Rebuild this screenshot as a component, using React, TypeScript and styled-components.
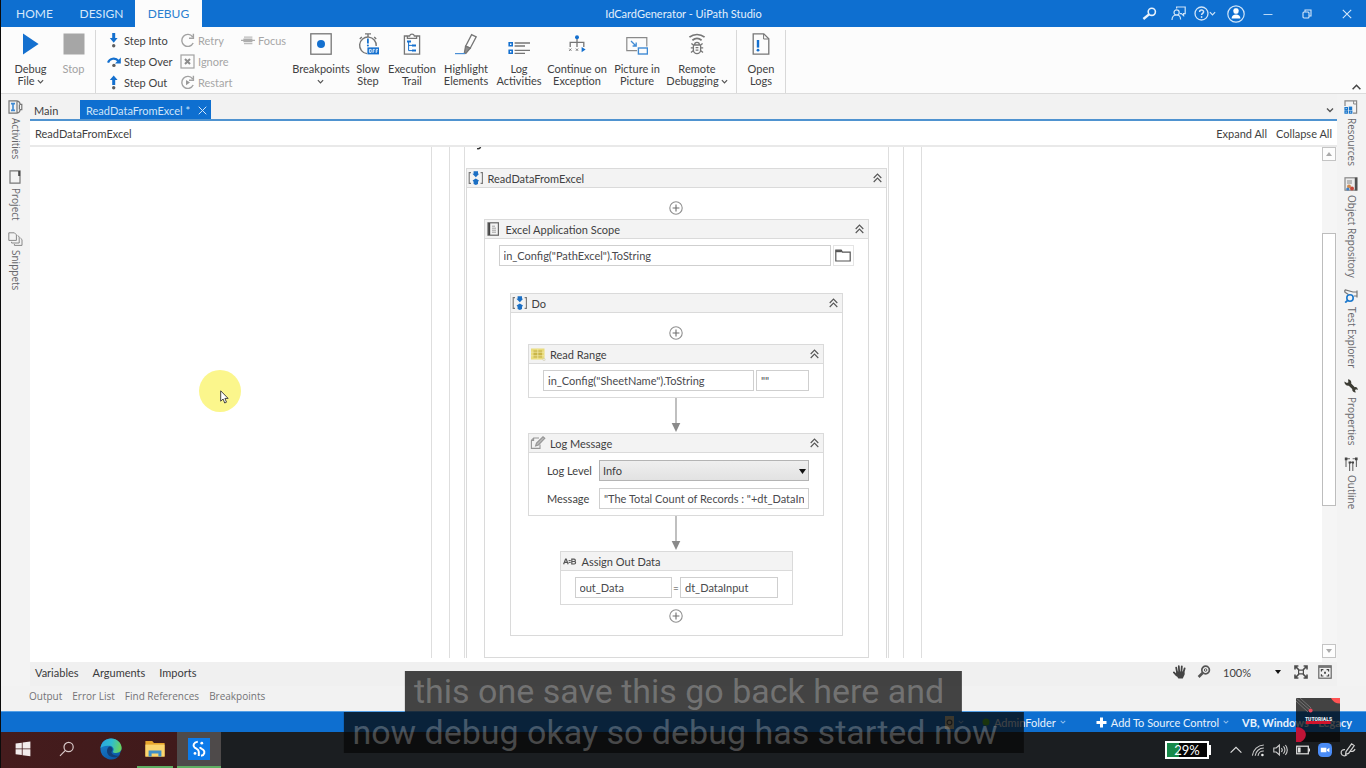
import React from "react";
import styled, { createGlobalStyle, css } from "styled-components";

const GlobalStyle = createGlobalStyle`
  *, *::before, *::after { box-sizing: border-box; }
  body { margin: 0; background: #f2f2f2; }
  body, button, input, select {
    font-family: Lato, "Open Sans", sans-serif;
    font-size: 11px;
    color: #3f3f42;
  }
  button { padding: 0; border: 0; background: none; cursor: pointer; }
  svg { display: block; flex: none; }
`;

const BLUE = "#0e6fd0";
const GREY = "#767676";

/* ---------- Frame ---------- */

const Shell = styled.div`
  position: relative;
  display: flex;
  flex-direction: column;
  min-height: 100vh;
  border-left: 1px solid #0b0b0b;
  overflow: hidden;
`;

const TitleBar = styled.header`
  position: relative;
  display: flex;
  align-items: stretch;
  justify-content: space-between;
  height: 27px;
  background: ${BLUE};
  color: #e4f0fb;
`;

const MenuTabs = styled.nav`
  display: flex;
`;

const MenuTab = styled.button<{ $active?: boolean }>`
  width: 67px;
  font-size: 12px;
  color: ${(p) => (p.$active ? "#2a7fd0" : "#d6e8fa")};
  background: ${(p) => (p.$active ? "#fcfcfc" : "transparent")};
`;

const AppTitle = styled.h1`
  position: absolute;
  left: 50%;
  top: 0;
  margin: 0;
  transform: translateX(-50%);
  line-height: 27px;
  font-size: 11px;
  font-weight: 400;
`;

const WindowTools = styled.div`
  display: flex;
  align-items: center;
  padding-right: 4px;
`;

const WindowButton = styled.button<{ $w: number }>`
  display: flex;
  align-items: center;
  justify-content: center;
  width: ${(p) => p.$w}px;
  height: 27px;
  color: #d6e8fa;
`;

/* ---------- Ribbon ---------- */

const Ribbon = styled.div`
  display: flex;
  height: 67px;
  padding-left: 8px;
  background: #fcfcfc;
  border-bottom: 1px solid #dcdcdc;
`;

const RibbonGroup = styled.div<{ $pad?: string }>`
  display: flex;
  padding: ${(p) => p.$pad ?? "0"};
  margin-top: 3px;
  border-right: 1px solid #d8d8d8;
`;

const BigButton = styled.button<{ $w: number; $off?: boolean }>`
  display: flex;
  flex-direction: column;
  align-items: center;
  gap: 8px;
  width: ${(p) => p.$w}px;
  padding-top: 3px;
  line-height: 12px;
  white-space: nowrap;
  color: ${(p) => (p.$off ? "#a2a2a2" : "#3f3f42")};
`;

const BigLabel = styled.span`
  display: flex;
  flex-direction: column;
  align-items: center;
`;

const LabelLine = styled.span`
  display: flex;
  align-items: center;
  gap: 2px;
  height: 12px;
`;

const SmallColumn = styled.div<{ $w: number }>`
  display: flex;
  flex-direction: column;
  width: ${(p) => p.$w}px;
`;

const SmallButton = styled.button<{ $off?: boolean }>`
  display: flex;
  align-items: center;
  gap: 3px;
  height: 21px;
  white-space: nowrap;
  color: ${(p) => (p.$off ? "#a6a6a6" : "#3f3f42")};
`;

const RibbonCollapse = styled.button`
  display: flex;
  align-items: flex-end;
  margin-left: auto;
  padding: 0 5px 3px;
`;

/* ---------- Work area ---------- */

const WorkArea = styled.div`
  display: flex;
  flex: 1;
  min-height: 0;
`;

const SideBar = styled.aside`
  display: flex;
  flex-direction: column;
  align-items: center;
  gap: 11px;
  width: 29px;
  padding: 6px 1px 0 0;
  background: #f3f3f3;
`;

const SideTab = styled.button`
  display: flex;
  flex-direction: column;
  align-items: center;
  gap: 4px;
  color: #66666a;
`;

const SideLabel = styled.span`
  writing-mode: vertical-rl;
  font-family: "Open Sans", sans-serif;
  font-size: 10px;
  line-height: 15px;
`;

const Center = styled.main`
  display: flex;
  flex-direction: column;
  flex: 1;
  min-width: 0;
`;

const FileTabs = styled.div`
  display: flex;
  align-items: flex-end;
  height: 27px;
  padding-left: 4px;
  border-bottom: 2px solid #4f93d0;
`;

const FileTab = styled.button<{ $active?: boolean }>`
  display: flex;
  align-items: center;
  justify-content: space-between;
  height: 19px;
  padding: ${(p) => (p.$active ? "1px 4px 0 6px" : "1px 0 0")};
  width: ${(p) => (p.$active ? "131px" : "46px")};
  background: ${(p) => (p.$active ? BLUE : "transparent")};
  color: ${(p) => (p.$active ? "#cfe4f8" : "#3f3f42")};
`;

const TabMenu = styled.button`
  margin-left: auto;
  padding: 0 3px 5px;
`;

const Crumbs = styled.div`
  display: flex;
  align-items: center;
  gap: 9px;
  height: 26px;
  padding: 0 5px;
  background: #fff;
  border-bottom: 2px solid #e9e9e9;
`;

const Crumb = styled.span`
  flex: 1;
`;

const CanvasRow = styled.div`
  display: flex;
  flex: 1;
  background: #fff;
`;

const Canvas = styled.div`
  position: relative;
  display: flex;
  justify-content: center;
  flex: 1;
  min-width: 0;
  padding-bottom: 4px;
`;

const ScrollBar = styled.div`
  display: flex;
  flex-direction: column;
  width: 15px;
  padding-bottom: 4px;
  background: #f5f5f5;
`;

const ScrollButton = styled.button`
  display: flex;
  align-items: center;
  justify-content: center;
  width: 14px;
  height: 14px;
  background: #fdfdfd;
  border: 1px solid #c4c4c4;
`;

const ScrollGap = styled.div<{ $grow: number }>`
  flex: ${(p) => p.$grow} 0 0;
`;

const ScrollThumb = styled.div`
  flex: 272 0 0;
  width: 14px;
  background: #fff;
  border: 1px solid #bdbdbd;
`;

/* ---------- Workflow ---------- */

const Guide = styled.div<{ $pad: number }>`
  display: flex;
  padding: 0 ${(p) => p.$pad}px;
  border: solid #dedede;
  border-width: 0 1px;
`;

const GuideInner = styled(Guide)`
  flex-direction: column;
`;

const ClippedMark = styled.div`
  height: 21px;
  padding-left: 10px;
`;

const Card = styled.section<{ $w: number; $open?: boolean }>`
  display: flex;
  flex-direction: column;
  width: ${(p) => p.$w}px;
  border: 1px solid #dadada;
  background: #fff;
  ${(p) =>
    p.$open &&
    css`
      flex: 1;
      border-bottom: 0;
    `}
`;

const CardHead = styled.header`
  display: flex;
  align-items: center;
  height: 19px;
  padding: 0 4px 0 1px;
  background: #f3f3f3;
  border-bottom: 1px solid #dadada;
`;

const CardIcon = styled.span`
  display: flex;
  width: 20px;
`;

const CardTitle = styled.h2`
  flex: 1;
  margin: 0;
  font-size: 11px;
  font-weight: 400;
  line-height: 17px;
`;

const CardBody = styled.div<{ $pad: string; $gap?: number }>`
  display: flex;
  flex-direction: column;
  align-items: center;
  gap: ${(p) => p.$gap ?? 0}px;
  padding: ${(p) => p.$pad};
`;

const FieldRow = styled.div`
  display: flex;
  align-items: center;
  align-self: stretch;
  gap: 2px;
`;

const Field = styled.input`
  flex: 1;
  min-width: 0;
  height: 21px;
  padding: 0 4px;
  border: 1px solid #cfcfcf;
  outline: 0;
  background: #fff;
  color: #4a4a4e;
`;

const RangeField = styled(Field)`
  flex: 0 0 53px;
`;

const FieldLabel = styled.label`
  width: 50px;
  padding-bottom: 1px;
`;

const SelectBox = styled.span`
  position: relative;
  display: flex;
  flex: 1;
`;

const LevelSelect = styled.select`
  appearance: none;
  flex: 1;
  height: 21px;
  padding: 0 3px;
  border: 1px solid #b4b4b4;
  border-radius: 0;
  background: linear-gradient(#efefef, #e2e2e2);
`;

const SelectArrow = styled.svg`
  position: absolute;
  right: 3px;
  top: 50%;
  margin-top: -2px;
  pointer-events: none;
`;

const BrowseButton = styled.button`
  display: flex;
  align-items: center;
  justify-content: center;
  width: 21px;
  height: 21px;
  border: 1px solid #e4e4e4;
`;

const AddButton = styled.button`
  height: 14px;
  margin-bottom: 4px;
`;

const Equals = styled.span`
  width: 4px;
  font-size: 10px;
  display: flex;
  justify-content: center;
`;

/* ---------- Footer bars ---------- */

const DesignerFooter = styled.div`
  display: flex;
  align-items: center;
  height: 24px;
  padding: 0 5px 4px;
  gap: 14px;
  background: #f0f0f0;
`;

const ZoomTools = styled.div`
  display: flex;
  align-items: center;
  gap: 10px;
  margin-left: auto;
`;

const ZoomSelect = styled.select`
  appearance: none;
  width: 63px;
  padding: 0 0 0 2px;
  border: 0;
  background: transparent;
`;

const OutputTabs = styled.nav`
  display: flex;
  align-items: flex-start;
  gap: 10px;
  height: 25px;
  padding: 3px 28px;
  background: #f2f2f2;
`;

const PanelTab = styled.button<{ $dim?: boolean }>`
  line-height: 15px;
  color: #3a3a3c;
`;

const OutputTab = styled(PanelTab)`
  font-family: "Open Sans", sans-serif;
  font-size: 10px;
  color: #727276;
`;

const StatusBar = styled.div`
  display: flex;
  align-items: center;
  justify-content: flex-end;
  height: 21px;
  padding-right: 14px;
  background: ${BLUE};
  border-top: 1px solid #55a0e6;
  color: #e8f2fc;
`;

const StatusItem = styled.button<{ $mr: number; $strong?: boolean }>`
  display: flex;
  align-items: center;
  gap: 4px;
  margin-right: ${(p) => p.$mr}px;
  line-height: 15px;
  color: inherit;
  font-weight: ${(p) => (p.$strong ? 700 : 400)};
`;

const TaskBar = styled.footer`
  display: flex;
  align-items: stretch;
  height: 36px;
  padding-right: 10px;
  background: linear-gradient(90deg, #451c1d 0, #401a1b 176px, #1b1e21 220px, #1b1e21 100%);
`;

const TaskButton = styled.button<{ $open?: boolean; $active?: boolean }>`
  display: flex;
  align-items: center;
  justify-content: center;
  width: ${(p) => (p.$open ? 36 : 44)}px;
  margin: ${(p) => (p.$open ? "0 4px" : "0")};
  background: ${(p) => (p.$active ? "#4e4a4a" : "transparent")};
  border-bottom: 2px solid ${(p) => (p.$open || p.$active ? "#5fae62" : "transparent")};
`;

const Tray = styled.div`
  display: flex;
  align-items: center;
  gap: 8px;
  margin-left: auto;
`;

const Battery = styled.div`
  display: flex;
  align-items: center;
  justify-content: center;
  width: 44px;
  height: 18px;
  border: 2px solid #fff;
  background: linear-gradient(90deg, #17894a 29%, #050505 29%);
  color: #fff;
  font-size: 13px;
  line-height: 14px;
`;

const BatteryMeter = styled.div`
  display: flex;
  align-items: center;
  margin-right: 10px;
`;

const BatteryNub = styled.span`
  width: 2px;
  height: 10px;
  background: #fff;
`;

/* ---------- Overlays ---------- */

const Captions = styled.div`
  position: absolute;
  left: 50%;
  bottom: 15px;
  display: flex;
  flex-direction: column;
  align-items: center;
  transform: translateX(-50%);
`;

const CaptionLine = styled.span<{ $tail: number }>`
  height: 41px;
  padding: 0 ${(p) => p.$tail}px 0 9px;
  background: rgba(8, 8, 8, 0.75);
  color: rgba(255, 255, 255, 0.25);
  font-family: Roboto, sans-serif;
  font-size: 34px;
  line-height: 41px;
  white-space: nowrap;
`;

const ChannelBadge = styled.div`
  position: absolute;
  right: 26px;
  bottom: 26px;
`;

const Pointer = styled.div`
  position: absolute;
  left: 169px;
  top: 223px;
  width: 42px;
  height: 42px;
  padding: 20px 0 0 21px;
  border-radius: 50%;
  background: #fbf68c;
`;

/* ---------- Icons ---------- */

const Chevron = ({ c = "#555", w = 7 }: { c?: string; w?: number }) => (
  <svg width={w} height={w} viewBox="0 0 8 8" fill="none" stroke={c} strokeWidth="1.4">
    <path d="M1 2.5 4 5.5 7 2.5" />
  </svg>
);

const DoubleUp = () => (
  <svg width="9" height="10" viewBox="0 0 9 10" fill="none" stroke="#555" strokeWidth="1.1">
    <path d="M.7 5 4.5 1 8.3 5M.7 9 4.5 5 8.3 9" />
  </svg>
);

const PlusCircle = () => (
  <svg width="14" height="14" viewBox="0 0 14 14" fill="none" stroke="#909090" strokeWidth="1.1">
    <circle cx="7" cy="7" r="6.2" />
    <path d="M7 3.6v6.8M3.6 7h6.8" stroke="#6e6e6e" />
  </svg>
);

const FlowArrow = ({ h }: { h: number }) => (
  <svg width="10" height={h} viewBox={`0 0 10 ${h}`}>
    <path d={`M5 0V${h - 7}`} stroke="#b0b0b0" strokeWidth="1.6" />
    <path d={`M.7 ${h - 10}h8.6l-4.3 9z`} fill="#8a8a8a" />
  </svg>
);

const SequenceIcon = () => (
  <svg width="16" height="14" viewBox="0 0 16 14">
    <path d="M3 1.600H1.200v10.800H3M12.600 1.600h1.800v10.800h-1.800" fill="none" stroke="#777" strokeWidth="1.1" />
    <path d="M5.600.2h4.400v2.600h1.200L7.800 6.200 4.400 2.800h1.200zM7.800 7.400l3.200 2-1 1.400v2.200L7.800 14l-2.200-1v-2.200l-1-1.400z" fill="#1b6fc4" />
  </svg>
);

const BookIcon = () => (
  <svg width="14" height="14" viewBox="0 0 14 14" fill="none" stroke="#666">
    <rect x="2" y=".8" width="10.4" height="12.4" strokeWidth="1.2" />
    <path d="M3.2 1v12" stroke="#444" strokeWidth="2" />
    <path d="M6 4.2h3M6 6.2h4M6 8.2h4M6 10.2h4" stroke="#999" strokeWidth=".9" />
  </svg>
);

const SheetIcon = () => (
  <svg width="16" height="13" viewBox="0 0 16 13">
    <rect x="1" y=".5" width="13.5" height="11" fill="#e9dc7c" />
    <path d="M3.500 2.400h8.600v7.200H3.500z" fill="#c9b548" />
    <path d="M1 4.200h13.500M1 7.800h13.500M7.800.5v11" stroke="#f1e9a8" strokeWidth=".8" />
    <circle cx="14" cy="11.600" r="1.200" fill="#f6f1cc" stroke="#bbb" strokeWidth=".4" />
  </svg>
);

const NoteIcon = () => (
  <svg width="16" height="14" viewBox="0 0 16 14" fill="none" stroke="#969696" strokeWidth="1.1">
    <path d="M9 2H3.600L1.400 4.400v8h8.600V8.600" />
    <path d="M1.400 4.400h2.200V2" />
    <path d="m5.600 9.800.9-2.800L13 .8 14.800 2.400 8.400 8.900z" fill="#b9b9b9" />
  </svg>
);

const AssignIcon = () => (
  <svg width="15" height="9" viewBox="0 0 15 9">
    <path d="M1.600 7.200 3.600 2h.6l2 5.200M2.400 5.400h3M9.800 2.200v4.800h2.400c1.800 0 1.800-2.400.2-2.500 1.300-.2 1.300-2.300-.3-2.300zM9.800 4.500h2.600" fill="none" stroke="#555" strokeWidth="1.200" />
    <path d="M6.600 3.600h2.200M6.600 5.400h2.200" stroke="#555" strokeWidth="1" />
  </svg>
);

const FolderIcon = () => (
  <svg width="16" height="13" viewBox="0 0 16 13" fill="none" stroke="#555" strokeWidth="1.2">
    <path d="M.8 12V1.2h5.4l1.2 1.9h7.8V12z" />
    <path d="M.8 2.2h6" strokeWidth="2" />
  </svg>
);

const DebugFileIcon = () => (
  <svg width="22" height="22" viewBox="0 0 22 22"><path d="M3 .6 18.6 11 3 21.4z" fill="#1470cf" /></svg>
);
const StopIcon = () => (
  <svg width="22" height="22" viewBox="0 0 22 22"><path d="M.5.5h21v21H.5z" fill="#a6a6a6" /></svg>
);
const BreakpointIcon = () => (
  <svg width="22" height="22" viewBox="0 0 22 22">
    <rect x=".8" y=".8" width="20.4" height="20.4" fill="none" stroke={GREY} strokeWidth="1.3" />
    <circle cx="11" cy="11" r="4" fill="#1470cf" />
  </svg>
);
const SlowIcon = () => (
  <svg width="22" height="22" viewBox="0 0 22 22" fill="none" stroke={GREY} strokeWidth="1.4">
    <path d="M10 20.600A8.300 8.300 0 1 1 19.200 13" />
    <path d="M8 .9h6M11 1v3M17.200 4l2 2M4.800 4l-2 2" />
    <path d="M10.900 5.600v5" stroke="#1470cf" strokeWidth="1.8" />
    <circle cx="10.900" cy="12.600" r="1" fill="#1470cf" stroke="none" />
    <rect x="10.400" y="14.400" width="11.600" height="7" fill="#1470cf" stroke="none" />
    <path d="M12.400 16.400h1.800v3h-1.800zM16 20v-3.600h1.800M16 18h1.400M19.200 20v-3.600H21M19.200 18h1.400" stroke="#fff" strokeWidth=".8" />
  </svg>
);
const TrailIcon = () => (
  <svg width="22" height="22" viewBox="0 0 22 22" fill="none" stroke={GREY} strokeWidth="1.3">
    <path d="M6 3H3.400v18.200h15.200V3H16" />
    <path d="M6.4 5.4V3h2.2a2.5 2.5 0 0 1 4.8 0h2.2v2.4z" />
    <path d="M7.6 8v9.6H12M7.6 12.4H12" stroke="#1470cf" strokeWidth="1" />
    <path d="M6 7.6h4v2H6zM11 11.4h4v2h-4zM11 16.4h4v2h-4z" fill="#1470cf" stroke="none" />
  </svg>
);
const HighlightIcon = () => (
  <svg width="22" height="22" viewBox="0 0 22 22" fill="none" stroke={GREY} strokeWidth="1.3">
    <path d="m10.6 13.2 6-11.6 4.6 2.2-6 11.4z" />
    <path d="m10.6 13.2 4.6 2-4.4 5.2-1.4-.8z" fill="#8d8d8d" />
    <path d="M0 20.600h10" stroke="#4a8fd6" strokeWidth="1.2" />
  </svg>
);
const LogIcon = () => (
  <svg width="22" height="22" viewBox="0 0 22 22" fill="none" stroke={GREY} strokeWidth="1.3">
    <path d="M6.600 10H22M6.600 13H17M6.600 17.400H22M6.600 20.400H17" />
    <path d="M1.200 9.800h3v3h-3zM1.200 17.200h3v3h-3z" stroke="#1470cf" strokeWidth="1.6" />
  </svg>
);
const ContinueIcon = () => (
  <svg width="22" height="22" viewBox="0 0 22 22" fill="none" stroke={GREY} strokeWidth="1.3">
    <path d="M11 5v9M4.200 14V9.400h13.600V14" />
    <circle cx="11" cy="4.2" r="2" fill="#1470cf" stroke="none" />
    <path d="m3.200 15.600 2.200 2.200m0-2.200-2.200 2.200M9.900 15.600l2.200 2.200m0-2.200-2.200 2.200" strokeWidth="1" />
    <path d="m15.600 14 4 2.600-4 2.600z" fill="#1470cf" stroke="none" />
  </svg>
);
const PictureIcon = () => (
  <svg width="22" height="22" viewBox="0 0 22 22" fill="none" stroke="#8a8a8a" strokeWidth="1.2">
    <path d="M11 17.6H.8V4.6h20v9" />
    <path d="m5 8 5 5M10.2 9.4V13H6.6" stroke="#3f8ad4" strokeWidth="1.3" />
    <rect x="12.4" y="15" width="9" height="6" stroke="#3f8ad4" strokeWidth="1.4" />
  </svg>
);
const RemoteIcon = () => (
  <svg width="22" height="22" viewBox="0 0 22 22" fill="none" stroke={GREY} strokeWidth="1.7">
    <path d="M3.400 4.200a12 12 0 0 1 15.200 0M6.400 7.200a7.600 7.600 0 0 1 9.200 0" />
    <path d="M8.600 11.800a2.400 2.400 0 0 1 4.800 0M7.400 12h7.200v5a3.600 3.600 0 0 1-7.200 0zM7.400 14.800H4.800M14.600 14.800h2.600M7.400 17.600l-2.400 2M14.600 17.600l2.400 2M7.400 12 5.400 10.400M14.600 12l2-1.600M9.600 14.600h2.800M9.600 17.200h2.800" strokeWidth="1.300" />
  </svg>
);
const OpenLogsIcon = () => (
  <svg width="22" height="22" viewBox="0 0 22 22" fill="none" stroke={GREY} strokeWidth="1.3">
    <path d="M3.200.8h10.600l5 5V21.200H3.200z" />
    <path d="M13.6 1v5h5" strokeWidth="1" />
    <path d="M8 7v7.6" stroke="#1470cf" strokeWidth="2.4" />
    <circle cx="8" cy="17.2" r="1.4" fill="#1470cf" stroke="none" />
  </svg>
);

const StepInto = () => (
  <svg width="14" height="15" viewBox="0 0 14 15"><path d="M5.2 0h3v5h2.4L6.7 9.8 2.8 5h2.4z" fill="#1470cf" /><circle cx="6.7" cy="12.8" r="1.7" fill="#5d5d5d" /></svg>
);
const StepOver = () => (
  <svg width="14" height="15" viewBox="0 0 14 15"><path d="M1 8.6A6 6 0 0 1 11.4 7" fill="none" stroke="#1470cf" strokeWidth="2.2" /><path d="M13.8 3.6V9.4H8z" fill="#1470cf" /><circle cx="6.900" cy="11.400" r="1.700" fill="#5d5d5d" /></svg>
);
const StepOut = () => (
  <svg width="14" height="15" viewBox="0 0 14 15"><path d="M6.7.4 10.6 5H8.2v5h-3V5H2.8z" fill="#1470cf" /><circle cx="6.7" cy="12.8" r="1.7" fill="#5d5d5d" /></svg>
);
const RetryIcon = () => (
  <svg width="15" height="15" viewBox="0 0 15 15" fill="none" stroke="#a2a2a2" strokeWidth="1.4"><path d="M12.6 3.8A6 6 0 1 0 13.2 10M13.4.8v4.4H9" /></svg>
);
const IgnoreIcon = () => (
  <svg width="15" height="15" viewBox="0 0 15 15" fill="none" stroke="#a2a2a2"><rect x="1" y="1" width="13" height="13" strokeWidth="1.2" /><path d="m5 5 5 5m0-5-5 5" stroke="#8c8c8c" strokeWidth="2" /></svg>
);
const RestartIcon = () => (
  <svg width="15" height="15" viewBox="0 0 15 15" fill="none" stroke="#a2a2a2" strokeWidth="1.4"><path d="M12.6 3.8A6 6 0 1 0 13.2 10M13.4.8v4.4H9" /><path d="m6 5 4 2.6-4 2.6z" fill="#999" stroke="none" /></svg>
);
const FocusIcon = () => (
  <svg width="14" height="15" viewBox="0 0 14 15"><path d="M3 3.6h8.4v1.2H3zM3 10h8.4v1.2H3z" fill="#bcbcbc" /><path d="M2.4 5.6h9v3.6h-9zM0 6.8h14v1.2H0z" fill="#adadad" /></svg>
);

const ActivitiesIcon = () => (
  <svg width="15" height="14" viewBox="0 0 15 14" fill="none" stroke="#777" strokeWidth="1.2">
    <path d="M8.6.8H1v12.4h7.6" /><path d="M3 3.600h4M3 10.400h4M5 3.600v6.800" stroke="#3f8ad4" strokeWidth="1.6" />
    <path d="M9 .8v12.4c2-.4 3-2 3.2-3.6h1.6V4.4h-1.6C12 2.8 11 1.200 9 .8zM11.400 4.400v5.200" />
  </svg>
);
const ProjectIcon = () => (
  <svg width="12" height="14" viewBox="0 0 12 14" fill="none" stroke="#777" strokeWidth="1.2"><path d="M11 13.200H1V.8h10z" /><path d="M10.200 1v5" stroke="#4a4a4a" strokeWidth="2" /></svg>
);
const SnippetsIcon = () => (
  <svg width="15" height="14" viewBox="0 0 15 14" fill="none" stroke="#888" strokeWidth="1"><path d="M.8.800h5.600l2 2v5.600H.8z" /><path d="M9.800 3.400 11.200 5v6H3.600V9.800M12.400 6l1.600 1.600V13.400H6.400V12" /></svg>
);
const ResourcesIcon = () => (
  <svg width="14" height="14" viewBox="0 0 14 14" fill="none"><path d="M1 6V.8h11.600v12.400H9" stroke="#888" strokeWidth="1.200" /><path d="M9.600 1v3h3" stroke="#888" /><path d="M1 7.600h2.400v2H1zM1 11.200h2.400v2H1zM5.400 11.200h2.400v2H5.400z" stroke="#1c78cc" strokeWidth="1.200" /><path d="M4.800 6.600h3.400v3.400H4.800z" fill="#1c78cc" /></svg>
);
const RepositoryIcon = () => (
  <svg width="14" height="14" viewBox="0 0 14 14" fill="none"><rect x="1" y=".8" width="12" height="12.400" fill="#ececec" stroke="#888" strokeWidth="1.200" /><path d="M12 .6v12.800" stroke="#505050" strokeWidth="2.400" /><path d="M3 4h5M3 6h5" stroke="#888" /><circle cx="5" cy="9.400" r="2" fill="#d08a4c" /><circle cx="8" cy="11.400" r="2" fill="#c4483c" /><circle cx="3.800" cy="12" r="1.600" fill="#3f7fc4" /></svg>
);
const TestIcon = () => (
  <svg width="14" height="14" viewBox="0 0 14 14" fill="none" stroke="#777" strokeWidth="1.200"><path d="M13 1.400v7M12.600 3H9L1.400.8C.4 1.200.6 3 1.400 3.600l3 2M12.600 7H10" /><circle cx="6" cy="9" r="3.200" stroke="#1c78cc" strokeWidth="1.600" /><path d="m3.600 11.400-2.400 2.200" stroke="#1c78cc" strokeWidth="1.800" /></svg>
);
const WrenchIcon = () => (
  <svg width="14" height="14" viewBox="0 0 14 14"><path d="M.4 2.600 3 4l1.400-.8L4 .2C6.600.4 7.800 2.600 7.200 4.600l3.600 3.600c1.600-.4 3 .8 3 2.800l-1.800-.8-1 1 .8 2.400C9.400 13.600 8 12 8.200 10L4.800 6.800C2.600 7.200.2 5.400.4 2.600z" fill="#3c3c34" /></svg>
);
const OutlineIcon = () => (
  <svg width="14" height="14" viewBox="0 0 14 14" fill="none" stroke="#666" strokeWidth="1.100"><path d="M2 2v8M12.400 2v8M5.600 5.600V14M8.800 5.600V14M2 1.800h4M8.600 1.800h3.800M5.600 5.400h3" /><path d="M.8.600h2.600v2.600H.8zM11 .6h2.600v2.600H11zM4.600 4.400H7V6.600H4.600zM7.800 4.400h2.200v2.200H7.800z" fill="#444" stroke="none" /></svg>
);

const SearchKey = () => (
  <svg width="15" height="14" viewBox="0 0 15 14" fill="none" stroke="#e8f2fc"><circle cx="9.800" cy="4.800" r="3.600" strokeWidth="1.600" /><path d="M7 7.400 1.400 12" strokeWidth="2.400" /></svg>
);
const FeedbackIcon = () => (
  <svg width="15" height="15" viewBox="0 0 15 15" fill="none" stroke="#cfe4f8" strokeWidth="1.200"><circle cx="5.600" cy="6.400" r="2.600" /><path d="M1 14c0-3 2-5 4.600-5s4 2 4 4.600M5.600 2.600V1h8.600v6.600h-1.600v2L10.400 7.600H9" /></svg>
);
const HelpIcon = () => (
  <svg width="15" height="15" viewBox="0 0 15 15" fill="none" stroke="#cfe4f8" strokeWidth="1.300"><circle cx="7.500" cy="7.500" r="6.500" /><path d="M5.600 6c0-2.600 4-2.400 4-.2 0 1.600-2 1.600-2 3.200" strokeWidth="1.500" /><circle cx="7.600" cy="11" r=".9" fill="#cfe4f8" stroke="none" /></svg>
);
const UserIcon = () => (
  <svg width="18" height="18" viewBox="0 0 18 18" fill="none"><circle cx="9" cy="9" r="8.200" stroke="#cfe4f8" strokeWidth="1.200" /><rect x="6.400" y="3.200" width="5.200" height="5.600" rx="2" fill="#fff" /><path d="M4.600 13.600c0-3 2-4.200 4.400-4.200s4.400 1.200 4.400 4.200z" fill="#fff" /></svg>
);
const MinIcon = () => (
  <svg width="10" height="10" viewBox="0 0 10 10"><path d="M.5 5.500h9" stroke="#b9d8f6" /></svg>
);
const RestoreIcon = () => (
  <svg width="10" height="10" viewBox="0 0 10 10" fill="none" stroke="#d6e8fa" strokeWidth="1.100"><rect x="1" y="3" width="6" height="6" rx="1" /><path d="M3 2.800V1h6v6H7.200" /></svg>
);
const CloseIcon = ({ s = 10 }: { s?: number }) => (
  <svg width={s} height={s} viewBox="0 0 10 10" fill="none" stroke="#d6e8fa" strokeWidth="1.100"><path d="m.8.8 8.400 8.400m0-8.400L.8 9.200" /></svg>
);

const HandIcon = () => (
  <svg width="14" height="14" viewBox="0 0 14 14" fill="none" stroke="#444" strokeLinecap="round"><path d="M4.200 8 3.200 2.600M6.200 7 5.800 1.200M8.400 7l.4-5.600M10.400 7.600l1.200-4.200M3.600 10.400.9 7.400" strokeWidth="1.800" /><path d="M3.600 6.400h7.600l.6 2.600-2 4.400H5.400L2.600 9.600z" fill="#444" stroke="none" /></svg>
);
const ZoomIcon = () => (
  <svg width="14" height="14" viewBox="0 0 14 14" fill="none" stroke="#555"><circle cx="8.600" cy="5" r="3.800" strokeWidth="1.700" /><circle cx="8.600" cy="5" r="1.300" strokeWidth="1" /><path d="M5.600 8 1.600 12" strokeWidth="2.600" /></svg>
);
const FitIcon = () => (
  <svg width="14" height="14" viewBox="0 0 14 14" fill="none" stroke="#4c4c4c" strokeWidth="1.600"><path d="M1 4.400V1h3.400M9.600 1H13v3.400M13 9.600V13H9.600M4.400 13H1V9.600M1.400 1.400 5 5M12.600 1.400 9 5M12.600 12.600 9 9M1.400 12.600 5 9" /><path d="M4.600 5.200h4.800v3.600H4.600z" strokeWidth="1.200" /></svg>
);
const OverviewIcon = () => (
  <svg width="14" height="14" viewBox="0 0 14 14" fill="none" stroke="#666" strokeWidth="1.200"><rect x=".8" y=".8" width="12.400" height="12.400" /><path d="M1 2h12" strokeWidth="1.600" /><path d="M3.400 6.400V4.600h2M8.600 4.600h2v1.800M10.600 9.200V11h-2M5.400 11h-2V9.200" stroke="#444" /><path d="M6 6.800h2v2H6z" fill="#555" stroke="none" /></svg>
);
const DownTriangle = ({ c = "#222" }: { c?: string }) => (
  <svg width="6" height="4" viewBox="0 0 6 4"><path d="M0 0h6L3 4z" fill={c} /></svg>
);
const UpTriangle = () => (
  <svg width="6" height="4" viewBox="0 0 6 4"><path d="M0 4h6L3 0z" fill="#aaa" /></svg>
);

const WindowsIcon = () => (
  <svg width="16" height="16" viewBox="0 0 16 16" fill="#f2ecec"><path d="M.6 2.600 6.800 1.700v5.800H.6zM7.600 1.600 15.400.5v7H7.600zM.6 8.300h6.200v5.800L.6 13.200zM7.600 8.300h7.800v7l-7.800-1.100z" /></svg>
);
const TaskSearchIcon = () => (
  <svg width="16" height="16" viewBox="0 0 16 16" fill="none" stroke="#d8c8c8" strokeWidth="1.200"><circle cx="9.600" cy="6" r="4.600" /><path d="M6.400 9.400 1 14.800" /></svg>
);
const EdgeIcon = () => (
  <svg width="22" height="22" viewBox="0 0 22 22">
    <defs>
      <linearGradient id="edgeTop" x1="0" y1="0.300" x2="1" y2="0.500"><stop offset="0" stopColor="#2aa5e0" /><stop offset=".5" stopColor="#2fbccf" /><stop offset="1" stopColor="#6bd35a" /></linearGradient>
      <linearGradient id="edgeLow" x1="0" y1="0" x2="0.600" y2="1"><stop offset="0" stopColor="#1c86d4" /><stop offset="1" stopColor="#0c59a6" /></linearGradient>
    </defs>
    <path d="M.4 11C.4 5 5 .4 11 .4S21.600 5 21.600 11c0 1.200-1.600 3.800-2 6A10.600 10.600 0 0 1 .4 11z" fill="url(#edgeLow)" />
    <path d="M.5 10C1.400 3.800 5.800.4 11 .4c6.200 0 10.600 4.600 10.600 9.400 0 3.200-2.400 5.200-5.400 5.200-2 0-3.600-.6-3.200-1.600 1.200-1.400.8-5-3-5.600C5.600 7.200 2 8.200.5 10z" fill="url(#edgeTop)" />
    <path d="M8.400 9.200c-2.200 2.400-1.800 7 1.600 9 3.400 2 7.600 1 9.600-.8-2 .6-6.800.4-8-2.400-.6-1.600.8-2 1-3.400.2-2-2.600-4-4.200-2.400z" fill="#123f77" />
  </svg>
);
const ExplorerIcon = () => (
  <svg width="20" height="18" viewBox="0 0 20 18"><path d="M.4 1h6.800l1.800 2h10.600v13.600H.4z" fill="#e8a52c" /><path d="M.4 4.600h19.200v12H.4z" fill="#fbd570" /><path d="M3.600 16.600v-6h12.800v6h-3v-3.200H6.600v3.200z" fill="#3f8fc8" /></svg>
);
const StudioIcon = () => (
  <svg width="22" height="22" viewBox="0 0 22 22" fill="none" stroke="#fff" strokeWidth="2">
    <rect width="22" height="22" fill="#0c7bea" stroke="none" />
    <path d="M9.800 3.800C5.400 4.200 4.600 7.600 6.600 9.400c1.400 1.200 4.200 1.600 4.200 4.400V18" />
    <path d="M13 17.800c3.800-.6 4.200-4.400 2.200-6-1.200-.9-2.800-1.400-3.400-2.600" />
    <circle cx="13.800" cy="5.200" r="1.400" fill="#fff" stroke="none" />
    <circle cx="7" cy="15.400" r="1.400" fill="#fff" stroke="none" />
  </svg>
);

const TrayUp = () => (
  <svg width="14" height="14" viewBox="0 0 14 14" fill="none" stroke="#ddd" strokeWidth="1.200"><path d="M1.600 9.600 7 4.400l5.400 5.200" /></svg>
);
const WifiIcon = () => (
  <svg width="14" height="14" viewBox="0 0 14 14" fill="none" stroke="#ccc" strokeWidth="1.100"><path d="M1.400 12.600A12 12 0 0 1 12.800 2M4.200 12.800A8.600 8.600 0 0 1 12.800 5M7 12.800a5.600 5.600 0 0 1 5.800-4.800" /><circle cx="11.400" cy="12" r="1.300" fill="#eee" stroke="none" /></svg>
);
const SpeakerIcon = () => (
  <svg width="15" height="14" viewBox="0 0 15 14" fill="none" stroke="#ccc" strokeWidth="1.100"><path d="M.8 5h2.400L6.400 2v10L3.200 9H.8zM8.400 5a3 3 0 0 1 0 4M10.400 3.400a5 5 0 0 1 0 7.200M12.400 2a7.600 7.600 0 0 1 0 10" /></svg>
);
const TrayBattery = () => (
  <svg width="14" height="10" viewBox="0 0 14 10"><rect x=".7" y="1.200" width="11.600" height="7.600" fill="none" stroke="#e4e4e4" strokeWidth="1.200" /><path d="M2 2.600h2.600v5H2zM12.800 3.600h1.200v3h-1.200z" fill="#e4e4e4" /></svg>
);
const ZoomAppIcon = () => (
  <svg width="14" height="14" viewBox="0 0 14 14"><rect width="14" height="14" rx="4.500" fill="#4a8cf7" /><path d="M2.800 4.800h5.600v4.400H2.800zM9 6.400l2.400-1.600v4.400L9 7.800z" fill="#fff" /></svg>
);
const PenIcon = () => (
  <svg width="16" height="16" viewBox="0 0 16 16" fill="none" stroke="#d0d0d0" strokeWidth="1.200"><path d="M6 9.600 11.600 1.800l2.600 1.800-5.600 7.800-3 1zM5 7.600C2.600 7.200.8 9 1.200 11.400c.4 2.400 4 3.400 5.800 1.200M10.400 9.200c2 .8 4-.2 4.600-2.200" /></svg>
);

const PointerIcon = () => (
  <svg width="9" height="14" viewBox="0 0 9 14"><path d="M.7.8v10.400l2.400-2.200 1.600 4 1.800-.8-1.600-3.800h3.200z" fill="#fff" stroke="#333" strokeWidth=".9" /></svg>
);

const BadgeArt = () => (
  <svg width="44" height="44" viewBox="0 0 44 44">
    <rect width="44" height="44" fill="#080808" fillOpacity=".75" />
    <path d="M35 0a10 10 0 0 0 9 5.600V0z" fill="#ff5353" />
    <path d="M0 29.400c3-.6 9 1 9.800 6.400.4 3.600-1.800 6.600-5 8.200H0z" fill="#c01436" />
    <path d="m0 0 15 13M4 0l11 10M0 3l12 11" stroke="#8a8a8a" strokeWidth=".7" />
    <circle cx="14.600" cy="12.600" r="2" fill="#e8485c" />
    <path d="M10 23h24.600v3H10z" fill="#d0142c" />
    <text x="22.500" y="22.500" textAnchor="middle" fontFamily="Roboto, sans-serif" fontSize="5" fontWeight="900" fill="#e4ecf4">TUTORIALS</text>
  </svg>
);

/* ---------- Data ---------- */

const RIBBON_TOOLS = [
  { w: 62, icon: <BreakpointIcon />, lines: ["Breakpoints", ""], menu: true },
  { w: 32, icon: <SlowIcon />, lines: ["Slow", "Step"] },
  { w: 56, icon: <TrailIcon />, lines: ["Execution", "Trail"] },
  { w: 52, icon: <HighlightIcon />, lines: ["Highlight", "Elements"] },
  { w: 54, icon: <LogIcon />, lines: ["Log", "Activities"] },
  { w: 62, icon: <ContinueIcon />, lines: ["Continue on", "Exception"] },
  { w: 58, icon: <PictureIcon />, lines: ["Picture in", "Picture"] },
  { w: 62, icon: <RemoteIcon />, lines: ["Remote", "Debugging"], menu: true },
];

const LEFT_TABS = [
  { icon: <ActivitiesIcon />, label: "Activities" },
  { icon: <ProjectIcon />, label: "Project" },
  { icon: <SnippetsIcon />, label: "Snippets" },
];

const RIGHT_TABS = [
  { icon: <ResourcesIcon />, label: "Resources" },
  { icon: <RepositoryIcon />, label: "Object Repository" },
  { icon: <TestIcon />, label: "Test Explorer" },
  { icon: <WrenchIcon />, label: "Properties" },
  { icon: <OutlineIcon />, label: "Outline" },
];

/* ---------- Composite parts ---------- */

type ToolProps = { w: number; icon: React.ReactNode; lines: string[]; menu?: boolean; off?: boolean };

const RibbonTool = ({ w, icon, lines, menu, off }: ToolProps) => (
  <BigButton $w={w} $off={off}>
    {icon}
    <BigLabel>
      <LabelLine>{lines[0]}</LabelLine>
      {lines.length > 1 && (
        <LabelLine>
          {lines[1]}
          {menu && <Chevron />}
        </LabelLine>
      )}
    </BigLabel>
  </BigButton>
);

const SideTabs = ({ items }: { items: { icon: React.ReactNode; label: string }[] }) => (
  <SideBar>
    {items.map((t) => (
      <SideTab key={t.label}>
        {t.icon}
        <SideLabel>{t.label}</SideLabel>
      </SideTab>
    ))}
  </SideBar>
);

type ActivityProps = {
  w: number;
  title: string;
  icon: React.ReactNode;
  pad: string;
  gap?: number;
  open?: boolean;
  fixed?: boolean;
  children: React.ReactNode;
};

const Activity = ({ w, title, icon, pad, gap, open, fixed, children }: ActivityProps) => (
  <Card $w={w} $open={open}>
    <CardHead>
      <CardIcon>{icon}</CardIcon>
      <CardTitle>{title}</CardTitle>
      {!fixed && (
        <button aria-label={`Collapse ${title}`}>
          <DoubleUp />
        </button>
      )}
    </CardHead>
    <CardBody $pad={pad} $gap={gap}>
      {children}
    </CardBody>
  </Card>
);

const AddActivity = () => (
  <AddButton aria-label="Add activity">
    <PlusCircle />
  </AddButton>
);

const Workflow = () => (
  <Guide $pad={17}>
    <Guide $pad={14}>
      <GuideInner $pad={1}>
        <ClippedMark>
          <svg width="6" height="3" viewBox="0 0 6 3">
            <path d="M4.600 0C4 1.600 3 2 1 1.600" fill="none" stroke="#333" strokeWidth="1.400" />
          </svg>
        </ClippedMark>
        <Activity w={421} title="ReadDataFromExcel" icon={<SequenceIcon />} pad="13px 0 0" open>
          <AddActivity />
          <Activity w={385} title="Excel Application Scope" icon={<BookIcon />} pad="6px 14px 21px">
            <FieldRow>
              <Field aria-label="Workbook path" defaultValue={'in_Config("PathExcel").ToString'} />
              <BrowseButton aria-label="Browse">
                <FolderIcon />
              </BrowseButton>
            </FieldRow>
            <DoBlock />
          </Activity>
        </Activity>
      </GuideInner>
    </Guide>
  </Guide>
);

const DoSpacer = styled.div`
  padding-top: 27px;
`;

const DoBlock = () => (
  <DoSpacer>
    <Activity w={333} title="Do" icon={<SequenceIcon />} pad="13px 0 8px">
      <AddActivity />
      <Activity w={296} title="Read Range" icon={<SheetIcon />} pad="6px 14px">
        <FieldRow>
          <Field aria-label="Sheet name" defaultValue={'in_Config("SheetName").ToString'} />
          <RangeField aria-label="Range" defaultValue={'""'} />
        </FieldRow>
      </Activity>
      <FlowArrow h={35} />
      <Activity w={296} title="Log Message" icon={<NoteIcon />} pad="7px 14px 6px 18px" gap={7}>
        <FieldRow>
          <FieldLabel htmlFor="level">Log Level</FieldLabel>
          <SelectBox>
            <LevelSelect id="level" defaultValue="Info">
              <option>Info</option>
            </LevelSelect>
            <SelectArrow width="7" height="5" viewBox="0 0 7 5">
              <path d="M0 0h7L3.500 5z" fill="#111" />
            </SelectArrow>
          </SelectBox>
        </FieldRow>
        <FieldRow>
          <FieldLabel htmlFor="message">Message</FieldLabel>
          <Field id="message" defaultValue={'"The Total Count of Records : "+dt_DataInput'} />
        </FieldRow>
      </Activity>
      <FlowArrow h={35} />
      <Activity w={233} title="Assign Out Data" icon={<AssignIcon />} pad="6px 14px" fixed>
        <FieldRow>
          <Field aria-label="To" defaultValue="out_Data" />
          <Equals>=</Equals>
          <Field aria-label="Value" defaultValue="dt_DataInput" />
        </FieldRow>
      </Activity>
      <PlusSpacer>
        <AddActivity />
      </PlusSpacer>
    </Activity>
  </DoSpacer>
);

const PlusSpacer = styled.div`
  padding-top: 4px;
`;

export default function App() {
  return (
    <Shell>
      <GlobalStyle />
      <TitleBar>
        <MenuTabs>
          <MenuTab>HOME</MenuTab>
          <MenuTab>DESIGN</MenuTab>
          <MenuTab $active>DEBUG</MenuTab>
        </MenuTabs>
        <AppTitle>IdCardGenerator - UiPath Studio</AppTitle>
        <WindowTools>
          <WindowButton $w={30} aria-label="Search"><SearchKey /></WindowButton>
          <WindowButton $w={28} aria-label="Feedback"><FeedbackIcon /></WindowButton>
          <WindowButton $w={26} aria-label="Help"><HelpIcon /><Chevron c="#cfe4f8" /></WindowButton>
          <WindowButton $w={36} aria-label="Account"><UserIcon /></WindowButton>
          <WindowButton $w={28} aria-label="Minimize"><MinIcon /></WindowButton>
          <WindowButton $w={50} aria-label="Restore"><RestoreIcon /></WindowButton>
          <WindowButton $w={30} aria-label="Close"><CloseIcon /></WindowButton>
        </WindowTools>
      </TitleBar>

      <Ribbon>
        <RibbonGroup>
          <RibbonTool w={43} icon={<DebugFileIcon />} lines={["Debug", "File"]} menu />
          <RibbonTool w={43} icon={<StopIcon />} lines={["Stop"]} off />
        </RibbonGroup>
        <RibbonGroup $pad="0 8px 0 11px">
          <SmallColumn $w={73}>
            <SmallButton><StepInto />Step Into</SmallButton>
            <SmallButton><StepOver />Step Over</SmallButton>
            <SmallButton><StepOut />Step Out</SmallButton>
          </SmallColumn>
          <SmallColumn $w={61}>
            <SmallButton $off><RetryIcon />Retry</SmallButton>
            <SmallButton $off><IgnoreIcon />Ignore</SmallButton>
            <SmallButton $off><RestartIcon />Restart</SmallButton>
          </SmallColumn>
          <SmallColumn $w={49}>
            <SmallButton $off><FocusIcon />Focus</SmallButton>
          </SmallColumn>
          {RIBBON_TOOLS.map((t) => (
            <RibbonTool key={t.lines[0]} {...t} />
          ))}
        </RibbonGroup>
        <RibbonGroup $pad="0 4px">
          <RibbonTool w={40} icon={<OpenLogsIcon />} lines={["Open", "Logs"]} />
        </RibbonGroup>
        <RibbonCollapse aria-label="Collapse ribbon">
          <svg width="9" height="6" viewBox="0 0 9 6" fill="none" stroke="#444" strokeWidth="1.500">
            <path d="M.6 5.200 4.500 1.200 8.400 5.200" />
          </svg>
        </RibbonCollapse>
      </Ribbon>

      <WorkArea>
        <SideTabs items={LEFT_TABS} />
        <Center>
          <FileTabs>
            <FileTab>Main</FileTab>
            <FileTab $active>
              ReadDataFromExcel *<CloseIcon s={9} />
            </FileTab>
            <TabMenu aria-label="Open files"><Chevron w={8} /></TabMenu>
          </FileTabs>
          <Crumbs>
            <Crumb>ReadDataFromExcel</Crumb>
            <button>Expand All</button>
            <button>Collapse All</button>
          </Crumbs>
          <CanvasRow>
            <Canvas>
              <Workflow />
              <Pointer><PointerIcon /></Pointer>
            </Canvas>
            <ScrollBar>
              <ScrollButton aria-label="Scroll up"><UpTriangle /></ScrollButton>
              <ScrollGap $grow={72} />
              <ScrollThumb />
              <ScrollGap $grow={138} />
              <ScrollButton aria-label="Scroll down"><DownTriangle c="#aaa" /></ScrollButton>
            </ScrollBar>
          </CanvasRow>
          <DesignerFooter>
            <PanelTab>Variables</PanelTab>
            <PanelTab>Arguments</PanelTab>
            <PanelTab>Imports</PanelTab>
            <ZoomTools>
              <button aria-label="Pan"><HandIcon /></button>
              <button aria-label="Zoom"><ZoomIcon /></button>
              <SelectBox>
                <ZoomSelect aria-label="Zoom level" defaultValue="100%">
                  <option>100%</option>
                </ZoomSelect>
                <SelectArrow width="6" height="4" viewBox="0 0 6 4">
                  <path d="M0 0h6L3 4z" fill="#111" />
                </SelectArrow>
              </SelectBox>
              <button aria-label="Fit to screen"><FitIcon /></button>
              <button aria-label="Overview"><OverviewIcon /></button>
            </ZoomTools>
          </DesignerFooter>
        </Center>
        <SideTabs items={RIGHT_TABS} />
      </WorkArea>

      <OutputTabs>
        <OutputTab>Output</OutputTab>
        <OutputTab>Error List</OutputTab>
        <OutputTab>Find References</OutputTab>
        <OutputTab>Breakpoints</OutputTab>
      </OutputTabs>

      <StatusBar>
        <StatusItem $mr={18} aria-label="Orchestrator">
          <svg width="9" height="13" viewBox="0 0 9 13" fill="none">
            <rect width="9" height="13" fill="#d8c8a0" />
            <circle cx="4.500" cy="6.500" r="2.400" stroke="#444" strokeWidth="1.200" />
          </svg>
          <Chevron c="#8fbdea" w={6} />
        </StatusItem>
        <StatusItem $mr={30}>
          <svg width="8" height="8" viewBox="0 0 8 8"><circle cx="4" cy="4" r="3.500" fill="#4fb81c" /></svg>
          AdminFolder<Chevron c="#8fbdea" w={6} />
        </StatusItem>
        <StatusItem $mr={13}>
          <svg width="11" height="11" viewBox="0 0 11 11"><path d="M4 .5h3V4h3.500v3H7v3.500H4V7H.5V4H4z" fill="#fff" /></svg>
          Add To Source Control<Chevron c="#8fbdea" w={6} />
        </StatusItem>
        <StatusItem $mr={0} $strong>VB, Windows - Legacy</StatusItem>
      </StatusBar>

      <TaskBar>
        <TaskButton aria-label="Start"><WindowsIcon /></TaskButton>
        <TaskButton aria-label="Search"><TaskSearchIcon /></TaskButton>
        <TaskButton aria-label="Edge"><EdgeIcon /></TaskButton>
        <TaskButton $open aria-label="File Explorer"><ExplorerIcon /></TaskButton>
        <TaskButton $active aria-label="UiPath Studio"><StudioIcon /></TaskButton>
        <Tray>
          <BatteryMeter>
            <Battery>29%</Battery>
            <BatteryNub />
          </BatteryMeter>
          <TrayUp />
          <WifiIcon />
          <SpeakerIcon />
          <TrayBattery />
          <ZoomAppIcon />
          <PenIcon />
        </Tray>
      </TaskBar>

      <Captions>
        <CaptionLine $tail={18}>this one save this go back here and</CaptionLine>
        <CaptionLine $tail={26}>now debug okay so debug has started now</CaptionLine>
      </Captions>
      <ChannelBadge><BadgeArt /></ChannelBadge>
    </Shell>
  );
}
